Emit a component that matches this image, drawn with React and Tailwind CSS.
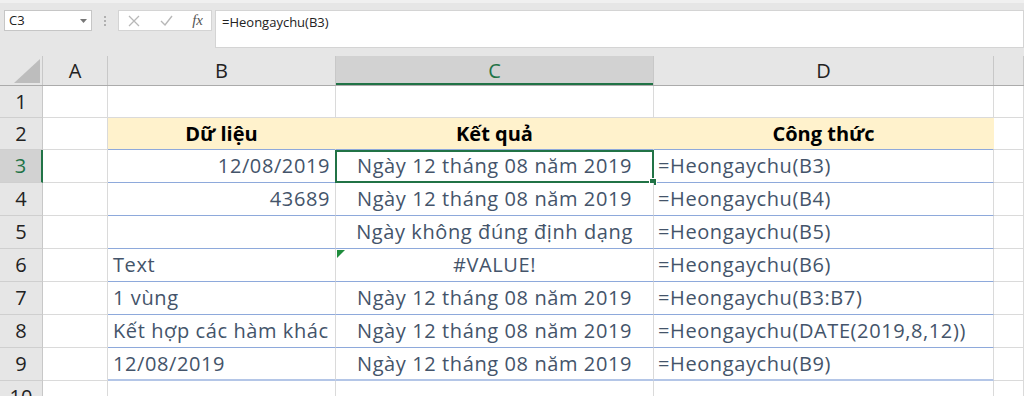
import React from 'react';

const font = { fontFamily: '"Open Sans", "Liberation Sans", sans-serif' };

const cols = ['A', 'B', 'C', 'D', ''];

const rows = [
  { n: 1, b: '', c: '', d: '' },
  { n: 2, head: true, b: 'Dữ liệu', c: 'Kết quả', d: 'Công thức' },
  { n: 3, b: '12/08/2019', bRight: true, c: 'Ngày 12 tháng 08 năm 2019', d: '=Heongaychu(B3)', active: true },
  { n: 4, b: '43689', bRight: true, c: 'Ngày 12 tháng 08 năm 2019', d: '=Heongaychu(B4)' },
  { n: 5, b: '', c: 'Ngày không đúng định dạng', d: '=Heongaychu(B5)' },
  { n: 6, b: 'Text', c: '#VALUE!', d: '=Heongaychu(B6)', err: true },
  { n: 7, b: '1 vùng', c: 'Ngày 12 tháng 08 năm 2019', d: '=Heongaychu(B3:B7)' },
  { n: 8, b: 'Kết hợp các hàm khác', c: 'Ngày 12 tháng 08 năm 2019', d: '=Heongaychu(DATE(2019,8,12))' },
  { n: 9, b: '12/08/2019', c: 'Ngày 12 tháng 08 năm 2019', d: '=Heongaychu(B9)', last: true },
  { n: 10, b: '', c: '', d: '' },
];

function FormulaBar() {
  return (
    <div className="h-[56px] bg-[#e6e6e6] border-t-[3px] border-[#f0f0f0] flex items-start pt-[7px] text-[13px] text-[#222]">
      <div className="ml-[4px] w-[88px] h-[21px] bg-white border border-[#c6c6c6] flex items-center justify-between px-[4px]">
        <span>C3</span>
        <svg width="7" height="4" viewBox="0 0 7 4"><path d="M0 0h7L3.5 4z" fill="#777" /></svg>
      </div>
      <div className="w-[26px] h-[21px] flex flex-col items-center justify-center gap-[2px]">
        <span className="w-[2px] h-[2px] bg-[#b0b0b0]" />
        <span className="w-[2px] h-[2px] bg-[#b0b0b0]" />
        <span className="w-[2px] h-[2px] bg-[#b0b0b0]" />
      </div>
      <div className="w-[94px] h-[21px] bg-white border border-[#d4d4d4] flex items-center justify-between pl-[9px] pr-[8px]">
        <svg width="12" height="12" viewBox="0 0 12 12"><path d="M1 1l10 10M11 1L1 11" stroke="#b8b8b8" strokeWidth="1.3" /></svg>
        <svg width="13" height="11" viewBox="0 0 13 11"><path d="M1 6l4 4 7-9" stroke="#b8b8b8" strokeWidth="1.4" fill="none" /></svg>
        <span className="italic text-[15px] text-[#555]" style={{ fontFamily: '"Liberation Serif", serif' }}>fx</span>
      </div>
      <div className="ml-[3px] flex-1 h-[38px] bg-white border border-[#d4d4d4] pl-[6px] pt-[2px]">
        =Heongaychu(B3)
      </div>
    </div>
  );
}

function Header() {
  return (
    <div className="flex h-[30px] bg-[#e6e6e6] border-b border-[#ababab]">
      <div className="w-[43px] relative border-r border-[#c8c8c8]">
        <svg className="absolute right-[2px] bottom-[2px]" width="26" height="24" viewBox="0 0 26 24">
          <path d="M26 0V24H0z" fill="#bdbdbd" />
        </svg>
      </div>
      {cols.map((c, i) => {
        const w = ['w-[65px]', 'w-[228px]', 'w-[318px]', 'w-[340px]', 'flex-1'][i];
        const sel = c === 'C';
        return (
          <div
            key={i}
            className={`${w} flex items-center justify-center text-[20px] border-r ${sel ? 'bg-[#d2d2d2] text-[#217346] border-[#c8c8c8] shadow-[inset_0_-2px_0_#217346]' : 'text-[#222] border-[#c8c8c8]'}`}
          >
            {c}
          </div>
        );
      })}
    </div>
  );
}

function Row({ r }) {
  const h = r.n <= 2 ? 'h-[32px]' : 'h-[33px]';
  const data = r.n >= 2 && r.n <= 9;
  const bottom = r.last ? 'border-b-2 border-b-[#b4c6e7]' : data ? 'border-b border-b-[#8ea9db]' : 'border-b border-b-[#dadada]';
  const fill = r.head
    ? 'bg-[#fff2cc] border-r-[#fff2cc] font-bold text-black'
    : 'bg-white border-r-[#dadada] text-[#44546a] tracking-[0.6px]';
  return (
    <div className={`flex ${h} text-[20px]`}>
      <div className={`w-[43px] flex items-center justify-center border-b border-b-[#cfcfcf] ${r.active ? 'bg-[#d2d2d2] text-[#217346] border-r-2 border-r-[#217346]' : 'bg-[#e6e6e6] text-[#222] border-r border-r-[#c8c8c8]'}`}>
        {r.n}
      </div>
      <div className="w-[65px] bg-white border-r border-b border-[#dadada]" />
      <div className={`w-[228px] flex items-center border-r ${bottom} ${fill} ${r.head ? 'justify-center' : r.bRight ? 'justify-end pr-[5px]' : 'pl-[5px]'}`}>
        {r.b}
      </div>
      <div className={`w-[318px] relative flex items-center justify-center border-r ${bottom} ${fill}`}>
        {r.c}
        {r.err && (
          <svg className="absolute left-[1px] top-[1px]" width="8" height="8" viewBox="0 0 8 8"><path d="M0 0h8L0 8z" fill="#1e8c3c" /></svg>
        )}
        {r.active && (
          <div className="absolute left-[-1px] top-0 right-[-1px] bottom-[-1px] border-2 border-[#217346]">
            <span className="absolute right-[-4px] bottom-[-4px] w-[6px] h-[6px] bg-[#217346] outline outline-1 outline-white" />
          </div>
        )}
      </div>
      <div className={`w-[340px] flex items-center border-r ${bottom} ${fill} ${r.head ? 'justify-center' : 'pl-[4px]'}`}>
        {r.d}
      </div>
      <div className="flex-1 bg-white border-r border-b border-[#dadada]" />
    </div>
  );
}

export default function App() {
  return (
    <div className="w-[1024px] h-[396px] overflow-hidden bg-white" style={font}>
      <FormulaBar />
      <Header />
      {rows.map((r) => (
        <Row key={r.n} r={r} />
      ))}
    </div>
  );
}
